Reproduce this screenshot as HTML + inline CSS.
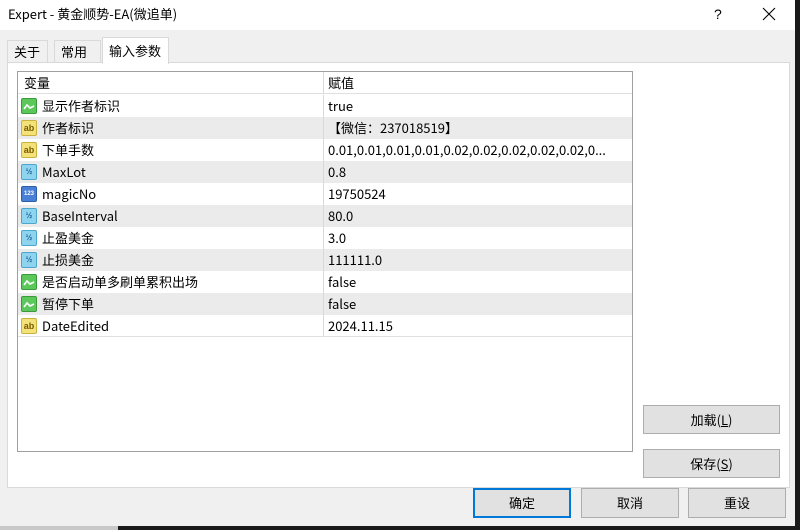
<!DOCTYPE html>
<html><head><meta charset="utf-8"><style>
*{margin:0;padding:0;box-sizing:border-box}
body{width:800px;height:530px;background:#1a1a1a;position:relative;overflow:hidden;font-family:"Noto Sans CJK SC","Liberation Sans",sans-serif;font-size:13px;color:#000;line-height:18px}
#dlg{position:absolute;left:0;top:0;width:795px;height:526px;background:#f0f0f0}
#title{position:absolute;left:0;top:0;width:795px;height:30px;background:#fff}
#title .t{position:absolute;left:8px;top:5px;font-size:13px}
.tab{position:absolute;top:40px;height:23px;border:1px solid #d9d9d9;border-bottom:none;background:#f0f0f0;padding:2px 6px;font-size:13px}
#panel{position:absolute;left:7px;top:62px;width:783px;height:426px;background:#fff;border:1px solid #d9d9d9}
#list{position:absolute;left:17px;top:71px;width:616px;height:381px;border:1px solid #a0a0a0;background:#fff}
.row{position:absolute;left:0;width:614px;height:22px;font-size:13px}
.row.g{background:#ebebeb}
.row span{position:absolute;top:2px;line-height:18px;white-space:nowrap}
.row .n{left:24px}.row .v{left:310px}
.row .line{position:absolute;left:305px;top:0;width:1px;height:22px;background:#d9d9d9}
.row.b{border-bottom:1px solid #e0e0e0}
.ic{position:absolute;left:3px;top:3px;width:16px;height:16px;border-radius:2px;font-family:"Liberation Sans",sans-serif;font-weight:bold;text-align:center;line-height:14px}
.bool{background:#5cc85c;border:1px solid #3a9a3a}
.ab{background:#f3e27a;border:1px solid #c9b33c;color:#7a5a00;font-size:9px}
.fl{background:#8fd4ee;border:1px solid #4aa8cf;color:#1a5f9a;font-size:8px}
.in{background:#4a7fd6;border:1px solid #2d5ea8;color:#fff;font-size:6px}
.btn{position:absolute;background:#e1e1e1;border:1px solid #adadad;text-align:center;font-size:13px}
</style></head><body>
<div id="dlg">
<div id="title"><span class="t">Expert - 黄金顺势-EA(微追单)</span>
<span style="position:absolute;left:714px;top:5px;font-size:14px;font-family:'Liberation Sans',sans-serif">?</span>
<svg style="position:absolute;left:762px;top:7px" width="14" height="14"><path d="M1 1 L13 13 M13 1 L1 13" stroke="#000" stroke-width="1.1"/></svg></div>
<div class="tab" style="left:7px;width:41px">关于</div>
<div class="tab" style="left:54px;width:47px">常用</div>
<div id="panel"></div>
<div class="tab" style="left:102px;top:37px;height:27px;width:67px;background:#fff;padding-top:4px">输入参数</div>
<div id="list">
<div class="row b" style="top:0"><span style="left:6px">变量</span><span class="v">赋值</span><div class="line"></div></div>
<div class="row" style="top:23px"><div class="ic bool"><svg width="14" height="14"><path d="M2 10 L5 6 L8 9 L12 7" stroke="#fff" stroke-width="1.6" fill="none"/></svg></div><span class="n">显示作者标识</span><span class="v">true</span><div class="line"></div></div>
<div class="row g" style="top:45px"><div class="ic ab">ab</div><span class="n">作者标识</span><span class="v">【微信：237018519】</span><div class="line"></div></div>
<div class="row" style="top:67px"><div class="ic ab">ab</div><span class="n">下单手数</span><span class="v">0.01,0.01,0.01,0.01,0.02,0.02,0.02,0.02,0.02,0...</span><div class="line"></div></div>
<div class="row g" style="top:89px"><div class="ic fl">½</div><span class="n">MaxLot</span><span class="v">0.8</span><div class="line"></div></div>
<div class="row" style="top:111px"><div class="ic in">123</div><span class="n">magicNo</span><span class="v">19750524</span><div class="line"></div></div>
<div class="row g" style="top:133px"><div class="ic fl">½</div><span class="n">BaseInterval</span><span class="v">80.0</span><div class="line"></div></div>
<div class="row" style="top:155px"><div class="ic fl">½</div><span class="n">止盈美金</span><span class="v">3.0</span><div class="line"></div></div>
<div class="row g" style="top:177px"><div class="ic fl">½</div><span class="n">止损美金</span><span class="v">111111.0</span><div class="line"></div></div>
<div class="row" style="top:199px"><div class="ic bool"><svg width="14" height="14"><path d="M2 10 L5 6 L8 9 L12 7" stroke="#fff" stroke-width="1.6" fill="none"/></svg></div><span class="n">是否启动单多刷单累积出场</span><span class="v">false</span><div class="line"></div></div>
<div class="row g" style="top:221px"><div class="ic bool"><svg width="14" height="14"><path d="M2 10 L5 6 L8 9 L12 7" stroke="#fff" stroke-width="1.6" fill="none"/></svg></div><span class="n">暂停下单</span><span class="v">false</span><div class="line"></div></div>
<div class="row" style="top:243px;border-bottom:1px solid #e0e0e0"><div class="ic ab">ab</div><span class="n">DateEdited</span><span class="v">2024.11.15</span><div class="line"></div></div>
</div>
<div class="btn" style="left:643px;top:405px;width:137px;height:29px;line-height:27px">加载(<u>L</u>)</div>
<div class="btn" style="left:643px;top:449px;width:137px;height:29px;line-height:27px">保存(<u>S</u>)</div>
<div class="btn" style="left:473px;top:488px;width:98px;height:30px;line-height:26px;border:2px solid #0078d7">确定</div>
<div class="btn" style="left:581px;top:488px;width:98px;height:30px;line-height:28px">取消</div>
<div class="btn" style="left:688px;top:488px;width:98px;height:30px;line-height:28px">重设</div>
</div>
<div style="position:absolute;left:0;top:526px;width:118px;height:4px;background:#c8c8c8"></div>
</body></html>
